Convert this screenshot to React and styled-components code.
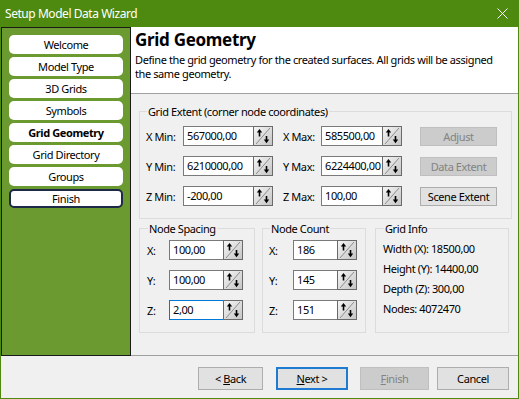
import React from "react";
import styled, { createGlobalStyle } from "styled-components";

const GlobalStyle = createGlobalStyle`
  html, body {
    margin: 0;
    padding: 0;
    background: #f0f0f0;
  }
  body {
    font-family: "Noto Sans", "Open Sans", sans-serif;
    font-size: 11px;
    letter-spacing: -0.4px;
    color: #000;
  }
`;

const Window = styled.div`
  width: 519px;
  height: 399px;
  display: flex;
  flex-direction: column;
  background: #f0f0f0;
`;

const TitleBar = styled.div`
  height: 27px;
  flex: none;
  background: #4f8a10;
  color: #fff;
  font-size: 12px;
  letter-spacing: -0.45px;
  display: flex;
  align-items: center;
  justify-content: space-between;
  padding: 0 11px 0 5px;
`;

const Frame = styled.div`
  flex: 1;
  display: flex;
  flex-direction: column;
  border: 1px solid #4f8a10;
  border-top: none;
`;

const Main = styled.div`
  height: 329px;
  flex: none;
  display: flex;
`;

const Sidebar = styled.nav`
  width: 130px;
  flex: none;
  box-sizing: border-box;
  background: #6b9b30;
  border: 1px solid #1a1a1a;
  padding: 7px 7px;
  display: flex;
  flex-direction: column;
  gap: 3px;
`;

const NavItem = styled.div`
  height: 19px;
  box-sizing: border-box;
  background: #fff;
  border-radius: 5px;
  border: ${(p) => (p.$current ? "2px solid #1c2a48" : "none")};
  font-weight: ${(p) => (p.$active ? "bold" : "normal")};
  display: flex;
  align-items: center;
  justify-content: center;
`;

const Content = styled.div`
  flex: 1;
  min-width: 0;
  display: flex;
  flex-direction: column;
`;

const Header = styled.div`
  height: 67px;
  flex: none;
  box-sizing: border-box;
  background: #fff;
  border-bottom: 1px solid #a0a0a0;
  padding: 1px 4px 0 4px;
`;

const Title = styled.h1`
  margin: 0;
  font-size: 17px;
  font-weight: bold;
  letter-spacing: -0.3px;
  line-height: 23px;
`;

const Description = styled.p`
  margin: 2px 0 0;
  line-height: 14px;
`;

const Body = styled.div`
  flex: 1;
  border-bottom: 1px solid #a0a0a0;
  padding: 10px 6px 0 8px;
  display: flex;
  flex-direction: column;
`;

const Group = styled.fieldset`
  margin: 0;
  min-width: 0;
  box-sizing: border-box;
  border: 1px solid #dcdcdc;
  padding: ${(p) => p.$pad || "0"};
  width: ${(p) => (p.$w ? `${p.$w}px` : "auto")};
  height: ${(p) => (p.$h ? `${p.$h}px` : "auto")};
  flex: none;
`;

const Legend = styled.legend`
  padding: 0 1px;
  margin-left: 1px;
  line-height: 15px;
`;

const Rows = styled.div`
  display: flex;
  flex-direction: column;
  gap: 10px;
`;

const Row = styled.div`
  display: flex;
  align-items: center;
`;

const Label = styled.span`
  width: ${(p) => p.$w}px;
  margin-left: ${(p) => p.$ml || 0}px;
  flex: none;
  white-space: nowrap;
`;

const LowerRow = styled.div`
  display: flex;
  margin-top: 2px;
`;

const InfoList = styled.div`
  display: flex;
  flex-direction: column;
  padding-top: 3px;
`;

const InfoLine = styled.div`
  line-height: 20px;
`;

const SpinBox = styled.div`
  width: ${(p) => p.$w}px;
  height: 20px;
  flex: none;
  box-sizing: border-box;
  display: flex;
  background: #fff;
  border: 1px solid ${(p) => (p.$focused ? "#0078d7" : "#7a7a7a")};
`;

const SpinText = styled.div`
  flex: 1;
  min-width: 0;
  padding-left: 3px;
  line-height: 18px;
  white-space: nowrap;
  overflow: hidden;
`;

const SpinIcon = styled.svg`
  flex: none;
  display: block;
  margin: -1px -1px -1px 0;
`;

const PlainButton = styled.div`
  height: ${(p) => p.$h || 19}px;
  width: ${(p) => (p.$w ? `${p.$w}px` : "auto")};
  margin-left: ${(p) => p.$ml || 0}px;
  flex: none;
  box-sizing: border-box;
  display: flex;
  align-items: center;
  justify-content: center;
  background: ${(p) => (p.$disabled ? "#cccccc" : "#e1e1e1")};
  color: ${(p) => (p.$disabled ? "#838383" : "#000")};
  border: ${(p) =>
    p.$default
      ? "2px solid #1e7bd1"
      : `1px solid ${p.$disabled ? "#bfbfbf" : "#adadad"}`};
  white-space: nowrap;
`;

const Footer = styled.div`
  flex: 1;
  display: flex;
  justify-content: flex-end;
  align-items: flex-start;
  padding: 11px 9px 0 0;
`;

const Spinner = () => (
  <SpinIcon width="20" height="20" viewBox="0 0 20 20">
    <defs>
      <linearGradient id="spg" x1="0" y1="0" x2="1" y2="1">
        <stop offset="0" stopColor="#f6f6f6" />
        <stop offset="1" stopColor="#c4c4c4" />
      </linearGradient>
    </defs>
    <rect x="0.5" y="0.5" width="19" height="19" fill="url(#spg)" stroke="#6a6a6a" />
    <line x1="3" y1="18" x2="17" y2="2" stroke="#8c8c8c" strokeWidth="1" />
    <path d="M6.5 10.5V5" stroke="#000" strokeWidth="1.6" />
    <path d="M3.8 6.6L6.5 3L9.2 6.6Z" fill="#000" />
    <path d="M13.5 10V15" stroke="#000" strokeWidth="1.6" />
    <path d="M10.8 13.6L13.5 17.2L16.2 13.6Z" fill="#000" />
  </SpinIcon>
);

const SpinField = ({ value, width, focused }) => (
  <SpinBox $w={width} $focused={focused}>
    <SpinText>{value}</SpinText>
    <Spinner />
  </SpinBox>
);

const CloseIcon = () => (
  <svg width="11" height="11" viewBox="0 0 11 11">
    <path d="M0.5 0.5L10.5 10.5M10.5 0.5L0.5 10.5" stroke="#fff" strokeWidth="1" />
  </svg>
);

const steps = [
  "Welcome",
  "Model Type",
  "3D Grids",
  "Symbols",
  "Grid Geometry",
  "Grid Directory",
  "Groups",
  "Finish",
];

const extentRows = [
  { min: "X Min:", minV: "567000,00", max: "X Max:", maxV: "585500,00", btn: "Adjust", off: true },
  { min: "Y Min:", minV: "6210000,00", max: "Y Max:", maxV: "6224400,00", btn: "Data Extent", off: true },
  { min: "Z Min:", minV: "-200,00", max: "Z Max:", maxV: "100,00", btn: "Scene Extent", off: false },
];

const FieldGroup = ({ title, width, labelW, inputW, pad, values, focusedIndex, ml }) => (
  <Group $w={width} $h={112} $pad={pad} style={ml ? { marginLeft: ml } : undefined}>
    <Legend>{title}</Legend>
    <Rows>
      {["X:", "Y:", "Z:"].map((l, i) => (
        <Row key={l}>
          <Label $w={labelW}>{l}</Label>
          <SpinField value={values[i]} width={inputW} focused={i === focusedIndex} />
        </Row>
      ))}
    </Rows>
  </Group>
);

const App = () => {
  return (
    <>
      <GlobalStyle />
      <Window>
        <TitleBar>
          <span>Setup Model Data Wizard</span>
          <CloseIcon />
        </TitleBar>
        <Frame>
          <Main>
            <Sidebar>
              {steps.map((s) => (
                <NavItem
                  key={s}
                  $active={s === "Grid Geometry"}
                  $current={s === "Finish"}
                >
                  {s}
                </NavItem>
              ))}
            </Sidebar>
            <Content>
              <Header>
                <Title>Grid Geometry</Title>
                <Description>
                  Define the grid geometry for the created surfaces. All grids will be assigned
                  <br />
                  the same geometry.
                </Description>
              </Header>
              <Body>
                <Group $pad="7px 0 12px 6px">
                  <Legend>Grid Extent (corner node coordinates)</Legend>
                  <Rows>
                    {extentRows.map((r) => (
                      <Row key={r.min}>
                        <Label $w={37}>{r.min}</Label>
                        <SpinField value={r.minV} width={90} />
                        <Label $w={38} $ml={10}>{r.max}</Label>
                        <SpinField value={r.maxV} width={81} />
                        <PlainButton $w={77} $ml={18} $disabled={r.off}>
                          {r.btn}
                        </PlainButton>
                      </Row>
                    ))}
                  </Rows>
                </Group>
                <LowerRow>
                  <FieldGroup
                    title="Node Spacing"
                    width={116}
                    labelW={22}
                    inputW={74}
                    pad="4px 0 0 7px"
                    values={["100,00", "100,00", "2,00"]}
                    focusedIndex={2}
                  />
                  <FieldGroup
                    title="Node Count"
                    width={104}
                    labelW={24}
                    inputW={64}
                    pad="4px 0 0 6px"
                    values={["186", "145", "151"]}
                    ml={7}
                  />
                  <Group $w={134} $h={112} $pad="0 0 0 7px" style={{ marginLeft: 9 }}>
                    <Legend>Grid Info</Legend>
                    <InfoList>
                      <InfoLine>Width (X): 18500,00</InfoLine>
                      <InfoLine>Height (Y): 14400,00</InfoLine>
                      <InfoLine>Depth (Z): 300,00</InfoLine>
                      <InfoLine>Nodes: 4072470</InfoLine>
                    </InfoList>
                  </Group>
                </LowerRow>
              </Body>
            </Content>
          </Main>
          <Footer>
            <PlainButton $w={65} $h={23}>
              &lt;&nbsp;<u>B</u>ack
            </PlainButton>
            <PlainButton $w={72} $h={23} $ml={13} $default>
              <u>N</u>ext &gt;
            </PlainButton>
            <PlainButton $w={69} $h={23} $ml={12} $disabled>
              <u>F</u>inish
            </PlainButton>
            <PlainButton $w={72} $h={23} $ml={8}>
              Cancel
            </PlainButton>
          </Footer>
        </Frame>
      </Window>
    </>
  );
};

export default App;
